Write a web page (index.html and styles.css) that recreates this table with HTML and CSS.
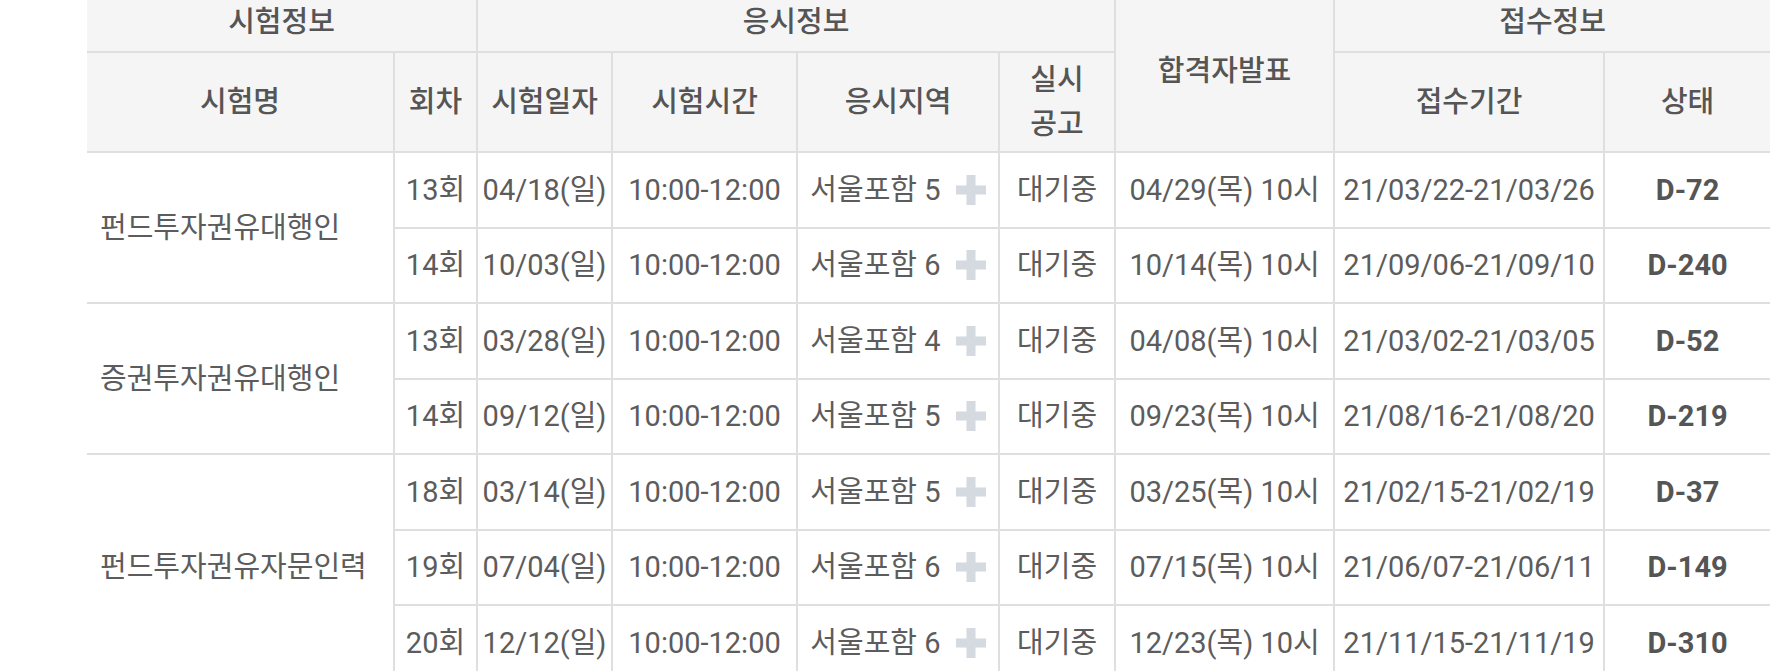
FILE: index.html
```html
<!DOCTYPE html>
<html>
<head>
	<title>시험일정</title>
	<meta charset="utf-8">
	<link rel="stylesheet" href="styles.css">
</head>
<body>
	<div class="schedule">
		<table class="exam_table">
			<colgroup>
				<col class="col_name">
				<col class="col_round">
				<col class="col_date">
				<col class="col_time">
				<col class="col_area">
				<col class="col_notice">
				<col class="col_result">
				<col class="col_period">
				<col class="col_state">
			</colgroup>
			<thead>
				<tr class="group_row">
					<th colspan="2" class="first_col">시험정보</th>
					<th colspan="4">응시정보</th>
					<th rowspan="2" class="result_head">합격자발표</th>
					<th colspan="2" class="last_col">접수정보</th>
				</tr>
				<tr class="title_row">
					<th class="first_col">시험명</th>
					<th>회차</th>
					<th>시험일자</th>
					<th>시험시간</th>
					<th>응시지역</th>
					<th class="two_line">실시<br>공고</th>
					<th>접수기간</th>
					<th class="last_col">상태</th>
				</tr>
			</thead>
			<tbody>
				<tr>
					<td rowspan="2" class="first_col exam_name">펀드투자권유대행인</td>
					<td>13회</td>
					<td>04/18(일)</td>
					<td>10:00-12:00</td>
					<td>서울포함 5 <span class="more"><svg viewBox="0 0 30 30"><rect x="10.5" y="0" width="9" height="30"/><rect x="0" y="10.5" width="30" height="9"/></svg></span></td>
					<td>대기중</td>
					<td>04/29(목) 10시</td>
					<td>21/03/22-21/03/26</td>
					<td class="last_col d_day">D-72</td>
				</tr>
				<tr>
					<td>14회</td>
					<td>10/03(일)</td>
					<td>10:00-12:00</td>
					<td>서울포함 6 <span class="more"><svg viewBox="0 0 30 30"><rect x="10.5" y="0" width="9" height="30"/><rect x="0" y="10.5" width="30" height="9"/></svg></span></td>
					<td>대기중</td>
					<td>10/14(목) 10시</td>
					<td>21/09/06-21/09/10</td>
					<td class="last_col d_day">D-240</td>
				</tr>
				<tr>
					<td rowspan="2" class="first_col exam_name">증권투자권유대행인</td>
					<td>13회</td>
					<td>03/28(일)</td>
					<td>10:00-12:00</td>
					<td>서울포함 4 <span class="more"><svg viewBox="0 0 30 30"><rect x="10.5" y="0" width="9" height="30"/><rect x="0" y="10.5" width="30" height="9"/></svg></span></td>
					<td>대기중</td>
					<td>04/08(목) 10시</td>
					<td>21/03/02-21/03/05</td>
					<td class="last_col d_day">D-52</td>
				</tr>
				<tr>
					<td>14회</td>
					<td>09/12(일)</td>
					<td>10:00-12:00</td>
					<td>서울포함 5 <span class="more"><svg viewBox="0 0 30 30"><rect x="10.5" y="0" width="9" height="30"/><rect x="0" y="10.5" width="30" height="9"/></svg></span></td>
					<td>대기중</td>
					<td>09/23(목) 10시</td>
					<td>21/08/16-21/08/20</td>
					<td class="last_col d_day">D-219</td>
				</tr>
				<tr>
					<td rowspan="3" class="first_col exam_name">펀드투자권유자문인력</td>
					<td>18회</td>
					<td>03/14(일)</td>
					<td>10:00-12:00</td>
					<td>서울포함 5 <span class="more"><svg viewBox="0 0 30 30"><rect x="10.5" y="0" width="9" height="30"/><rect x="0" y="10.5" width="30" height="9"/></svg></span></td>
					<td>대기중</td>
					<td>03/25(목) 10시</td>
					<td>21/02/15-21/02/19</td>
					<td class="last_col d_day">D-37</td>
				</tr>
				<tr>
					<td>19회</td>
					<td>07/04(일)</td>
					<td>10:00-12:00</td>
					<td>서울포함 6 <span class="more"><svg viewBox="0 0 30 30"><rect x="10.5" y="0" width="9" height="30"/><rect x="0" y="10.5" width="30" height="9"/></svg></span></td>
					<td>대기중</td>
					<td>07/15(목) 10시</td>
					<td>21/06/07-21/06/11</td>
					<td class="last_col d_day">D-149</td>
				</tr>
				<tr>
					<td>20회</td>
					<td>12/12(일)</td>
					<td>10:00-12:00</td>
					<td>서울포함 6 <span class="more"><svg viewBox="0 0 30 30"><rect x="10.5" y="0" width="9" height="30"/><rect x="0" y="10.5" width="30" height="9"/></svg></span></td>
					<td>대기중</td>
					<td>12/23(목) 10시</td>
					<td>21/11/15-21/11/19</td>
					<td class="last_col d_day">D-310</td>
				</tr>
			</tbody>
		</table>
	</div>
</body>
</html>
```

FILE: styles.css
```css
*{
	box-sizing:border-box;
	margin:0;
	padding:0;
}
body{
	background:white;
	font-family:Roboto,"Noto Sans CJK KR",sans-serif;
	font-size:29px;
	color:#5c5c5c;
}
.schedule{
	margin-top:-8px;
	padding-left:87px;
}
.exam_table{
	width:1683px;
	table-layout:fixed;
	border-collapse:collapse;
}
.col_name{width:307px;}
.col_round{width:83px;}
.col_date{width:135px;}
.col_time{width:185px;}
.col_area{width:202px;}
.col_notice{width:116px;}
.col_result{width:219px;}
.col_period{width:270px;}
.col_state{width:166px;}
.exam_table th,
.exam_table td{
	border:2px solid #dfdfdf;
	text-align:center;
	vertical-align:middle;
	white-space:nowrap;
	line-height:44px;
	padding:0;
}
.exam_table th{
	background:#f5f5f5;
	color:#555;
	font-weight:500;
}
.exam_table .first_col{
	border-left:none;
}
.exam_table .last_col{
	border-right:none;
}
.group_row th{
	border-top:none;
	height:60px;
}
.group_row .result_head{
	padding-bottom:2px;
}
.title_row th{
	height:100px;
}
.exam_table td{
	height:75.5px;
}
.exam_table .exam_name{
	text-align:left;
	padding-left:13px;
}
.d_day{
	font-weight:bold;
	color:#555;
}
.more{
	display:inline-block;
	width:30px;
	height:30px;
	margin-left:8px;
	vertical-align:-5px;
}
.more svg{
	display:block;
	width:30px;
	height:30px;
	fill:#d4dadf;
}
```
